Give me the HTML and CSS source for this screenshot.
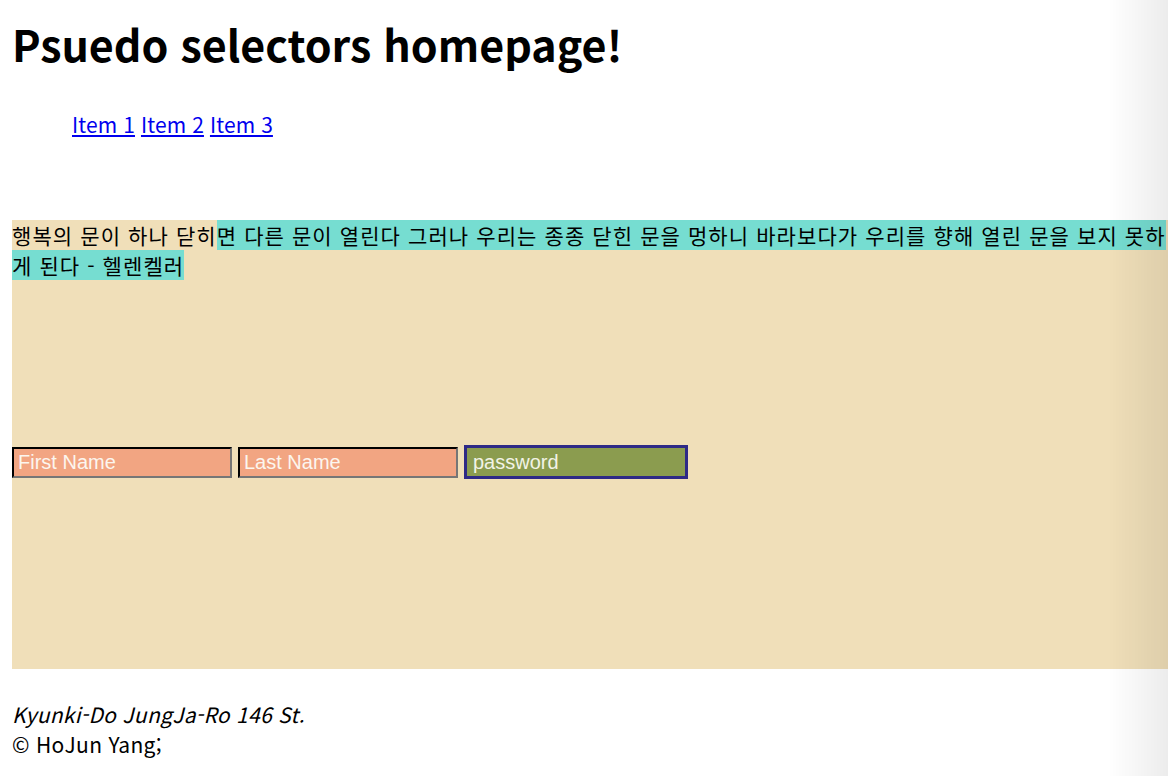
FILE: index.html
```html
<!DOCTYPE html>
<html lang="ko">
<head>
<meta charset="utf-8">
<title>Psuedo selectors</title>
<link rel="stylesheet" href="styles.css">
</head>
<body>
<h1 class="title">Psuedo selectors homepage!</h1>
<nav class="nav">
  <ul class="menu">
    <li class="menu-item"><a href="#">Item 1</a></li>
    <li class="menu-item"><a href="#">Item 2</a></li>
    <li class="menu-item"><a href="#">Item 3</a></li>
  </ul>
</nav>
<section class="content">
  <p class="quote"><span class="plain">행복의 문이 하나 닫히</span><span class="hl">면 다른 문이 열린다 그러나 우리는 종종 닫힌 문을 멍하니 바라보다가 우리를 향해 열린 문을 보지 못하게 된다 - 헬렌켈러</span></p>
  <form class="login">
    <input class="field" type="text" placeholder="First Name">
    <input class="field" type="text" placeholder="Last Name">
    <input class="field field-pw" type="password" placeholder="password">
  </form>
</section>
<footer class="footer">
  <address class="addr">Kyunki-Do JungJa-Ro 146 St.</address>
  <p class="copy">© HoJun Yang;</p>
</footer>
<div class="edge-shade"></div>
</body>
</html>
```
FILE: styles.css
```css
html, body {
  margin: 0;
  padding: 0;
}
body {
  padding-left: 12px;
  font-family: "Noto Sans CJK KR", "Noto Sans", sans-serif;
  font-size: 20px;
  color: #000;
  background: #fff;
  overflow: hidden;
}
.title {
  margin: 16px 0 0;
  font-size: 43px;
  line-height: 54px;
  font-weight: 700;
}
.menu {
  margin: 39px 0 0;
  padding: 0 0 0 60px;
  list-style: none;
  line-height: 30px;
  font-size: 21px;
  letter-spacing: 0.1px;
}
.menu-item {
  display: inline;
}
.menu-item a {
  color: #0000ee;
}
.content {
  margin-top: 81px;
  height: 449px;
  background: #f0dfb9;
}
.quote {
  margin: 0;
  font-size: 21px;
  letter-spacing: 1.1px;
  line-height: 30px;
}
.hl {
  background: #76ddd1;
}
.login {
  margin-top: 165px;
  display: flex;
  gap: 6px;
  align-items: center;
}
.field {
  box-sizing: border-box;
  width: 220px;
  height: 31px;
  margin: 0;
  padding: 0 4px;
  border: 2px inset #767676;
  border-top-color: #222;
  border-left-color: #222;
  background: #f2a582;
  font-family: "Liberation Sans", Arial, sans-serif;
  font-size: 20px;
  color: #fff;
}
.field::placeholder {
  color: #fcf6ef;
}
.field-pw {
  width: 224px;
  height: 34px;
  padding-left: 6px;
  border: 3px solid #2e2a86;
  background: #8b9c4f;
}
.field-pw::placeholder {
  color: #f2f3e6;
}
.footer {
  margin-top: 30px;
  line-height: 30px;
  font-size: 21px;
  letter-spacing: 0.3px;
}
.addr {
  font-style: italic;
}
.copy {
  margin: 0;
}
.edge-shade {
  position: fixed;
  top: 0;
  right: 0;
  width: 60px;
  height: 100%;
  pointer-events: none;
  background: linear-gradient(to right, rgba(0,0,0,0), rgba(0,0,0,0.075));
}
```
